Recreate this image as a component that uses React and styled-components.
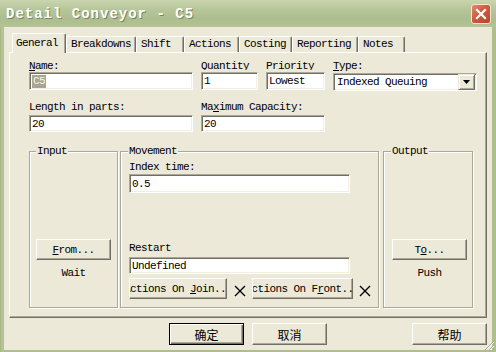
import React from 'react';
import styled, { createGlobalStyle } from 'styled-components';

const MONO = `"Liberation Mono", "Courier New", monospace`;
const CJK = `"Noto Sans CJK SC", "Noto Sans", sans-serif`;

const Global = createGlobalStyle`
  html, body { margin: 0; padding: 0; background: #ece9d8; }
  body { width: 496px; height: 352px; overflow: hidden; }
  #root { width: 496px; height: 352px; }
`;

const Window = styled.div`
  position: relative;
  width: 496px;
  height: 352px;
  box-sizing: border-box;
  display: flex;
  flex-direction: column;
  background: linear-gradient(to right, #a3b47f 0, #b9c79c 2px, #aebe8c 4px);
  font-family: ${MONO};
  font-size: 11px;
  letter-spacing: -0.6px;
  color: #000;
`;

const TitleBar = styled.div`
  flex: none;
  height: 27px;
  display: flex;
  align-items: center;
  justify-content: space-between;
  padding: 0 5px 0 6px;
  background: linear-gradient(#c9d5ae 0%, #b7c69a 35%, #adbd8d 70%, #b4c395 100%);
`;

const Title = styled.div`
  font-family: ${MONO};
  font-weight: bold;
  font-size: 14px;
  letter-spacing: 1px;
  color: #fff;
  text-shadow: 1px 1px 0 #78875a;
`;

const CloseButton = styled.div`
  width: 20px;
  height: 20px;
  box-sizing: border-box;
  border: 1px solid #f3e3d8;
  border-radius: 3px;
  background: linear-gradient(135deg, #e08a70 0%, #cf5a3e 45%, #b8452c 100%);
  display: flex;
  align-items: center;
  justify-content: center;
`;

const Body = styled.div`
  flex: 1;
  margin: 0 4px 2px 4px;
  background: #ece9d8;
  padding: 6px 5px 0 5px;
  display: flex;
  flex-direction: column;
`;

const TabStrip = styled.div`
  display: flex;
  align-items: flex-end;
  height: 19px;
  padding-left: 3px;
  position: relative;
  z-index: 1;
`;

const Tab = styled.div`
  box-sizing: border-box;
  width: ${p => p.$w}px;
  height: ${p => (p.$active ? 20 : 16)}px;
  margin-bottom: ${p => (p.$active ? -1 : 0)}px;
  padding: ${p => (p.$active ? '3px 0 0 3px' : '1px 0 0 4px')};
  line-height: 12px;
  background: #ece9d8;
  border-top: 1px solid #fff;
  border-left: 1px solid #fff;
  border-right: 1px solid #716f64;
  box-shadow: inset -1px 0 0 #aca899;
  border-radius: 2px 2px 0 0;
  white-space: nowrap;
`;

const Panel = styled.div`
  box-sizing: border-box;
  height: 266px;
  border-top: 1px solid #fff;
  border-left: 1px solid #fff;
  border-right: 1px solid #716f64;
  border-bottom: 1px solid #716f64;
  box-shadow: inset -1px -1px 0 #aca899;
  padding: 7px 0 0 19px;
  display: flex;
  flex-direction: column;
`;

const FieldGrid = styled.div`
  display: grid;
  grid-template-columns: 164px 57px 59px 144px;
  column-gap: 8px;
  row-gap: 10px;
`;

const Field = styled.div`
  display: flex;
  flex-direction: column;
  gap: ${p => p.$gap || 0}px;
  grid-column: ${p => p.$span || 'auto'};
`;

const Label = styled.div`
  height: ${p => p.$h || 12}px;
  margin-bottom: ${p => p.$mb || 0}px;
  line-height: 12px;
  overflow: hidden;
  white-space: nowrap;
`;

const Input = styled.div`
  box-sizing: border-box;
  height: ${p => p.$h || 18}px;
  width: ${p => (p.$w ? `${p.$w}px` : '100%')};
  background: #fff;
  border: 1px solid;
  border-color: #aca899 #fff #fff #aca899;
  box-shadow: inset 1px 1px 0 #716f64, inset -1px -1px 0 #f1efe2;
  padding: 0 0 0 2px;
  display: flex;
  align-items: center;
  white-space: pre;
  overflow: hidden;
`;

const Selected = styled.span`
  background: #a8a693;
  color: #f4f3ea;
  padding: 0 1px;
  line-height: 13px;
`;

const SelectText = styled.span`
  flex: 1;
  padding-left: 1px;
`;

const DropButton = styled.div`
  box-sizing: border-box;
  width: 17px;
  height: 16px;
  margin-right: 1px;
  background: #ece9d8;
  border: 1px solid;
  border-color: #ece9d8 #716f64 #716f64 #ece9d8;
  box-shadow: inset 1px 1px 0 #fff, inset -1px -1px 0 #aca899;
  display: flex;
  align-items: center;
  justify-content: center;
`;

const GroupRow = styled.div`
  display: flex;
  margin-top: 13px;
  height: 163px;
`;

const Group = styled.fieldset`
  box-sizing: border-box;
  width: ${p => p.$w}px;
  margin: 0 ${p => p.$mr || 0}px 0 0;
  padding: 0;
  min-width: 0;
  border: 1px solid #aca899;
  box-shadow: inset 1px 1px 0 #fff, 1px 1px 0 #fff;
`;

const Legend = styled.legend`
  margin-left: ${p => p.$ml || 5}px;
  padding: 0 1px;
  line-height: 12px;
  background: #ece9d8;
`;

const SideBody = styled.div`
  display: flex;
  flex-direction: column;
  align-items: flex-start;
  padding-left: ${p => p.$pl}px;
`;

const SideButtonSlot = styled.div`
  margin-top: 82px;
`;

const StatusText = styled.div`
  margin-top: 7px;
  width: 75px;
  text-align: center;
  line-height: 13px;
`;

const MoveBody = styled.div`
  display: flex;
  flex-direction: column;
  padding-left: 8px;
`;

const Spacer = styled.div`
  height: ${p => p.$h}px;
  flex: none;
`;

const Button = styled.div`
  box-sizing: border-box;
  width: ${p => p.$w}px;
  height: ${p => p.$h || 21}px;
  background: #ece9d8;
  border: 1px solid;
  border-color: #fff #716f64 #716f64 #fff;
  box-shadow: inset -1px -1px 0 #aca899;
  display: flex;
  align-items: center;
  justify-content: center;
  overflow: hidden;
  line-height: 12px;
`;

const ButtonText = styled.span`
  flex: none;
  white-space: pre;
`;

const ActionRow = styled.div`
  display: flex;
  align-items: center;
  margin-top: 4px;
`;

const XSlot = styled.div`
  width: ${p => p.$w}px;
  display: flex;
  justify-content: center;
  padding-top: 5px;
`;

const BottomRow = styled.div`
  display: flex;
  gap: 8px;
  margin-top: 5px;
  padding-left: 160px;
`;

const DialogButton = styled.div`
  box-sizing: border-box;
  width: 75px;
  height: 22px;
  margin-left: ${p => (p.$push ? 'auto' : '0')};
  background: #ece9d8;
  border: 1px solid;
  border-color: ${p => (p.$default ? '#000' : '#fff #716f64 #716f64 #fff')};
  box-shadow: ${p =>
    p.$default
      ? 'inset 1px 1px 0 #fff, inset -1px -1px 0 #716f64, inset -2px -2px 0 #aca899'
      : 'inset -1px -1px 0 #aca899'};
  font-family: ${CJK};
  font-size: 12px;
  letter-spacing: 0;
  display: flex;
  align-items: center;
  justify-content: center;
`;

const Grip = styled.svg`
  position: absolute;
  right: 1px;
  bottom: 1px;
`;

const XMark = () => (
  <svg width="12" height="12" viewBox="0 0 12 12">
    <path d="M1 1 L11 11 M11 1 L1 11" stroke="#000" strokeWidth="1.4" fill="none" />
  </svg>
);

const tabs = [
  { label: 'General', w: 54, active: true },
  { label: 'Breakdowns', w: 70 },
  { label: 'Shift', w: 48 },
  { label: 'Actions', w: 55 },
  { label: 'Costing', w: 53 },
  { label: 'Reporting', w: 66 },
  { label: 'Notes', w: 47 },
];

export default function App() {
  return (
    <>
      <Global />
      <Window>
        <TitleBar>
          <Title>Detail Conveyor - C5</Title>
          <CloseButton>
            <svg width="12" height="12" viewBox="0 0 12 12">
              <path d="M2 2 L10 10 M10 2 L2 10" stroke="#fff" strokeWidth="2.2" strokeLinecap="square" />
            </svg>
          </CloseButton>
        </TitleBar>
        <Body>
          <TabStrip>
            {tabs.map(t => (
              <Tab key={t.label} $w={t.w} $active={t.active}>
                {t.label}
              </Tab>
            ))}
          </TabStrip>
          <Panel>
            <FieldGrid>
              <Field>
                <Label><u>N</u>ame:</Label>
                <Input><Selected>C5</Selected></Input>
              </Field>
              <Field>
                <Label $h={10} $mb={2}><u>Q</u>uantity</Label>
                <Input>1</Input>
              </Field>
              <Field>
                <Label $h={10} $mb={2}><u>P</u>riority</Label>
                <Input>Lowest</Input>
              </Field>
              <Field>
                <Label $h={13}><u>T</u>ype:</Label>
                <Input $h={18}>
                  <SelectText>Indexed Queuing</SelectText>
                  <DropButton>
                    <svg width="7" height="4" viewBox="0 0 7 4">
                      <path d="M0 0 H7 L3.5 4 Z" fill="#000" />
                    </svg>
                  </DropButton>
                </Input>
              </Field>
              <Field $gap={2}>
                <Label>Length in parts:</Label>
                <Input $h={17}>20</Input>
              </Field>
              <Field $gap={2} $span="2 / span 2">
                <Label>Ma<u>x</u>imum Capacity:</Label>
                <Input $h={17}>20</Input>
              </Field>
            </FieldGrid>
            <GroupRow>
              <Group $w={89} $mr={2}>
                <Legend $ml={6}>Input</Legend>
                <SideBody $pl={6}>
                  <SideButtonSlot>
                    <Button $w={75}><ButtonText><u>F</u>rom...</ButtonText></Button>
                  </SideButtonSlot>
                  <StatusText>Wait</StatusText>
                </SideBody>
              </Group>
              <Group $w={259} $mr={4}>
                <Legend $ml={7}>Movement</Legend>
                <MoveBody>
                  <Spacer $h={4} />
                  <Label>Index time:</Label>
                  <Spacer $h={1} />
                  <Input $h={19} $w={221}>0.5</Input>
                  <Spacer $h={49} />
                  <Label>Restart</Label>
                  <Spacer $h={3} />
                  <Input $h={17} $w={221}>Undefined</Input>
                  <ActionRow>
                    <Button $w={98}><ButtonText>Actions On <u>J</u>oin...</ButtonText></Button>
                    <XSlot $w={25}><XMark /></XSlot>
                    <Button $w={101}><ButtonText>Actions On F<u>r</u>ont...</ButtonText></Button>
                    <XSlot $w={24}><XMark /></XSlot>
                  </ActionRow>
                </MoveBody>
              </Group>
              <Group $w={90}>
                <Legend $ml={7}>Output</Legend>
                <SideBody $pl={8}>
                  <SideButtonSlot>
                    <Button $w={75}><ButtonText>T<u>o</u>...</ButtonText></Button>
                  </SideButtonSlot>
                  <StatusText>Push</StatusText>
                </SideBody>
              </Group>
            </GroupRow>
          </Panel>
          <BottomRow>
            <DialogButton $default>确定</DialogButton>
            <DialogButton>取消</DialogButton>
            <DialogButton $push>帮助</DialogButton>
          </BottomRow>
        </Body>
        <Grip width="12" height="12" viewBox="0 0 12 12">
          <path d="M11 2 L2 11 M11 6 L6 11 M11 10 L10 11" stroke="#aca899" strokeWidth="1" />
          <path d="M11 3 L3 11 M11 7 L7 11" stroke="#fff" strokeWidth="1" />
        </Grip>
      </Window>
    </>
  );
}
